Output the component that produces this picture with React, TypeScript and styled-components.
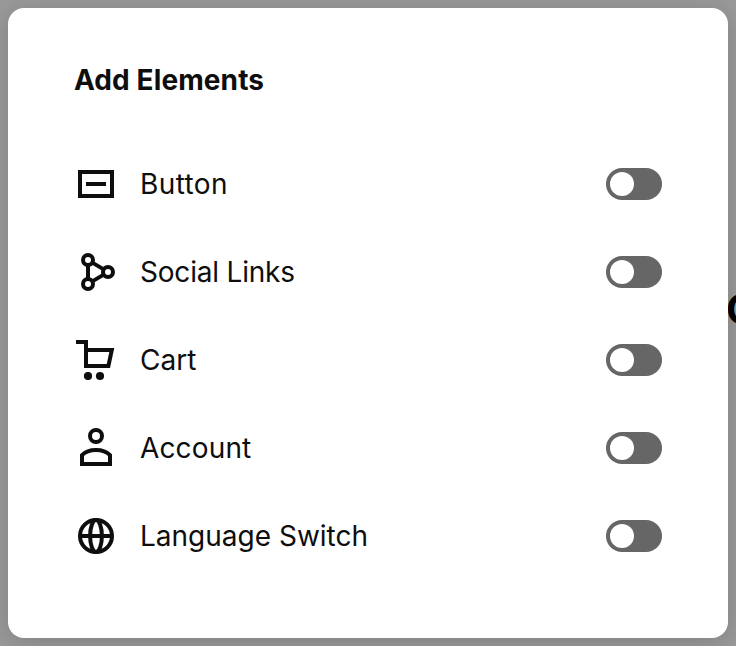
import { useState } from 'react';
import type { ReactNode } from 'react';

import styled, { createGlobalStyle } from 'styled-components';

const ELEMENTS: { name: string; spacing: number; icon: ReactNode }[] = [
  {
    name: 'Button',
    spacing: 0.4,
    icon: <path d="M4 8H36V32H4ZM10 20H30" />,
  },
  {
    name: 'Social Links',
    spacing: -0.2,
    icon: (
      <>
        <circle cx="12" cy="8" r="5" />
        <circle cx="12" cy="32" r="5" />
        <circle cx="32" cy="20" r="5" />
        <path d="M12 13V27M16.3 10.6L27.7 17.4M16.3 29.4L27.7 22.6" />
      </>
    ),
  },
  {
    name: 'Cart',
    spacing: 0,
    icon: (
      <>
        <path d="M0 2H10V26H32.4L35.8 10H10" />
        <circle cx="12" cy="36" r="4.1" fill="currentColor" stroke="none" />
        <circle cx="24" cy="36" r="4.1" fill="currentColor" stroke="none" />
      </>
    ),
  },
  {
    name: 'Account',
    spacing: 0.15,
    icon: (
      <>
        <circle cx="20" cy="8" r="6" />
        <path d="M6 36V27.2C9 24 14.5 22 20 22S31 24 34 27.2V36Z" />
      </>
    ),
  },
  {
    name: 'Language Switch',
    spacing: 0,
    icon: (
      <>
        <circle cx="20" cy="20" r="16" />
        <ellipse cx="20" cy="20" rx="5.9" ry="16" />
        <path d="M4 20H36" />
      </>
    ),
  },
];

const App = () => {
  const [enabled, setEnabled] = useState<Record<string, boolean>>({});

  const toggle = (name: string) => setEnabled((prev) => ({ ...prev, [name]: !prev[name] }));

  return (
    <Page>
      <GlobalStyle />
      <PageHeading>C</PageHeading>
      <Panel>
        <Title>Add Elements</Title>
        <List>
          {ELEMENTS.map(({ name, spacing, icon }) => (
            <Row key={name}>
              <Icon viewBox="0 0 40 40" aria-hidden>
                {icon}
              </Icon>
              <Label $spacing={spacing}>{name}</Label>
              <Switch
                type="button"
                role="switch"
                aria-label={name}
                aria-checked={!!enabled[name]}
                $on={!!enabled[name]}
                onClick={() => toggle(name)}
              >
                <Knob />
              </Switch>
            </Row>
          ))}
        </List>
      </Panel>
    </Page>
  );
};

export default App;

const GlobalStyle = createGlobalStyle`
  * {
    box-sizing: border-box;
  }
  body {
    margin: 0;
    font-family: Inter, 'Liberation Sans', sans-serif;
    color: #0e0e0e;
  }
`;

const Page = styled.div`
  position: relative;
  display: flex;
  height: 646px;
  padding: 8px;
  overflow: hidden;
  background: #999;
`;

/* page content showing from under the panel */
const PageHeading = styled.div`
  position: absolute;
  left: 726px;
  top: 284px;
  font-size: 41px;
  line-height: 50px;
  font-weight: 700;
  color: #000;
`;

const Panel = styled.section`
  position: relative;
  flex: 1;
  padding: 52px 66px 0;
  background: #fff;
  border-radius: 16px;
  box-shadow: 0 4px 24px rgba(0, 0, 0, 0.16);
`;

const Title = styled.h2`
  margin: 0 0 40px;
  font-size: 28px;
  line-height: 40px;
  font-weight: 700;
  letter-spacing: 0.1px;
`;

const List = styled.ul`
  margin: 0;
  padding: 0 0 0 2px;
  list-style: none;
`;

const Row = styled.li`
  display: flex;
  align-items: center;
  height: 88px;
`;

const Icon = styled.svg`
  width: 40px;
  height: 40px;
  margin-right: 24px;
  overflow: visible;
  fill: none;
  stroke: currentColor;
  stroke-width: 4;
`;

const Label = styled.span<{ $spacing: number }>`
  flex: 1;
  font-size: 28px;
  line-height: 40px;
  letter-spacing: ${({ $spacing }) => $spacing}px;
`;

const Switch = styled.button<{ $on: boolean }>`
  display: flex;
  justify-content: ${({ $on }) => ($on ? 'flex-end' : 'flex-start')};
  width: 56px;
  height: 32px;
  padding: 4px;
  border: 0;
  border-radius: 16px;
  background: ${({ $on }) => ($on ? '#0e0e0e' : '#666')};
  cursor: pointer;
`;

const Knob = styled.span`
  width: 24px;
  height: 24px;
  border-radius: 50%;
  background: #fff;
`;
